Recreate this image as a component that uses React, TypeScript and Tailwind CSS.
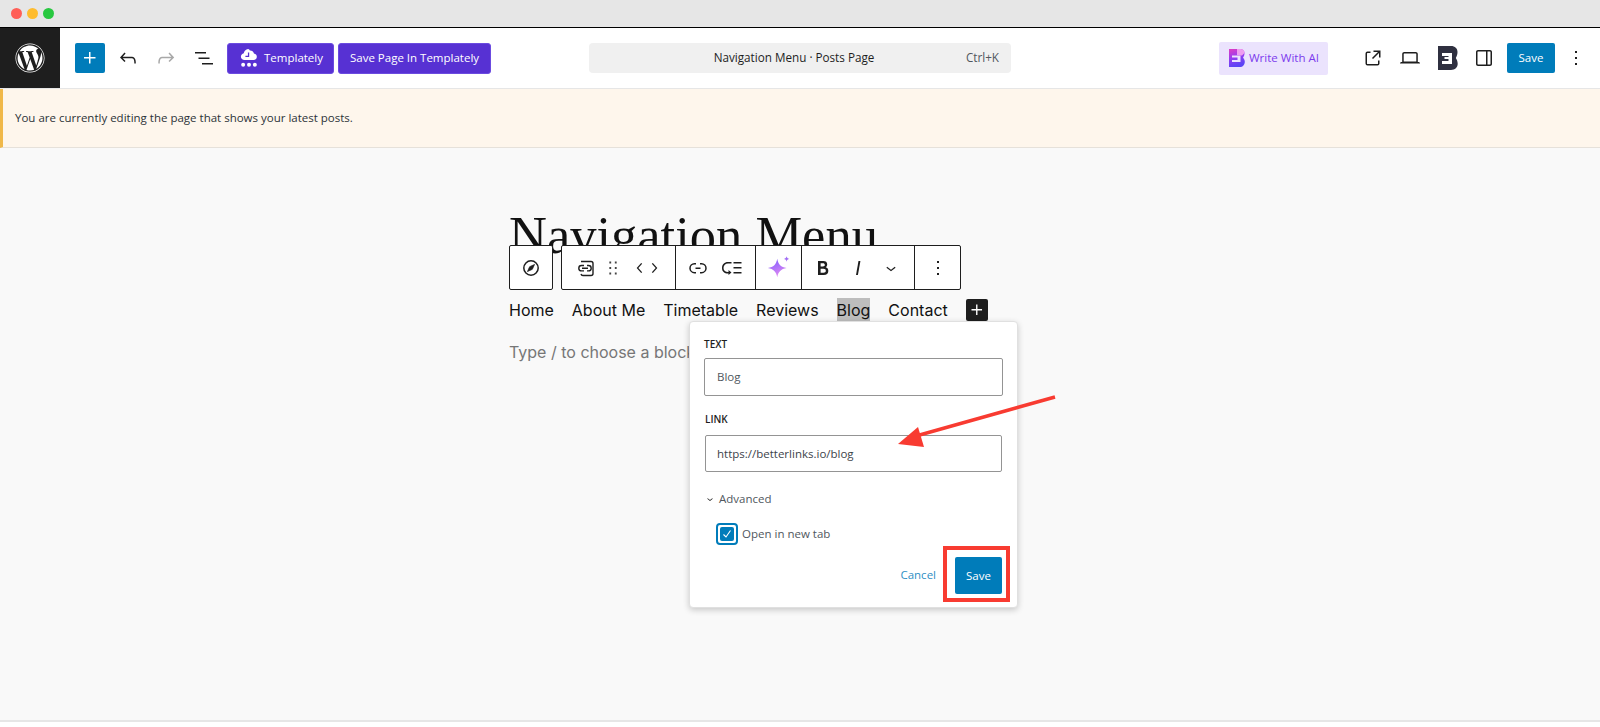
import React from 'react';
import { FaWordpress } from 'react-icons/fa';

const UI_FONT = "font-['Open_Sans','Liberation_Sans',sans-serif]";

function Icon({ d, className = 'w-6 h-6' }: { d: string; className?: string }) {
  return (
    <svg viewBox="0 0 24 24" className={className} fill="currentColor">
      <path d={d} />
    </svg>
  );
}

const paths = {
  plus: 'M11 12.5V17.5H12.5V12.5H17.5V11H12.5V6H11V11H6V12.5H11Z',
  undo: 'M18.3 11.7c-.6-.6-1.4-.9-2.3-.9H6.7l2.9-3.3-1.1-1-4.5 5L8.5 16l1-1-2.7-2.7H16c.5 0 .9.2 1.3.5 1 1 1 3.4 1 4.5v.3h1.5v-.2c0-1.5 0-4.3-1.5-5.7z',
  redo: 'M15.6 6.5l-1.1 1 2.9 3.3H8c-.9 0-1.7.3-2.3.9-1.4 1.5-1.4 4.2-1.4 5.6v.2h1.5v-.3c0-1.1 0-3.5 1-4.5.3-.3.7-.5 1.3-.5h9.2L14.5 15l1.1 1.1 4.6-4.6-4.6-5z',
  list: 'M3 6h11v1.5H3V6Zm3.5 5.5h11V13h-11v-1.5ZM21 17H10v1.5h11V17Z',
  external: 'M19.5 4.5h-7V6h4.44l-5.97 5.97 1.06 1.06L18 7.06v4.44h1.5v-7Zm-13 1a2 2 0 0 0-2 2v10a2 2 0 0 0 2 2h10a2 2 0 0 0 2-2v-3H17v3a.5.5 0 0 1-.5.5h-10a.5.5 0 0 1-.5-.5v-10a.5.5 0 0 1 .5-.5h3V5.5h-3Z',
  laptop: 'M20.5 16h-.7V8c0-1.1-.9-2-2-2H6.2c-1.1 0-2 .9-2 2v8h-.7c-.8 0-1.5.7-1.5 1.5h20c0-.8-.7-1.5-1.5-1.5zM5.7 8c0-.3.2-.5.5-.5h11.6c.3 0 .5.2.5.5v7.6H5.7V8z',
  sidebar: 'M18 4H6c-1.1 0-2 .9-2 2v12c0 1.1.9 2 2 2h12c1.1 0 2-.9 2-2V6c0-1.1-.9-2-2-2zm-4 14.5H6c-.3 0-.5-.2-.5-.5V6c0-.3.2-.5.5-.5h8v13zm4.5-.5c0 .3-.2.5-.5.5h-2.5v-13H18c.3 0 .5.2.5.5v12z',
  dots: 'M13 19h-2v-2h2v2zm0-6h-2v-2h2v2zm0-6h-2V5h2v2z',
  drag: 'M8 7h2V5H8v2zm0 6h2v-2H8v2zm0 6h2v-2H8v2zm6-14v2h2V5h-2zm0 8h2v-2h-2v2zm0 6h2v-2h-2v2z',
  left: 'M14.6 7l-1.2-1L8 12l5.4 6 1.2-1-4.6-5z',
  right: 'M10.6 6L9.4 7l4.6 5-4.6 5 1.2 1 5.4-6z',
  link: 'M10 17.389H8.444A5.194 5.194 0 1 1 8.444 7H10v1.5H8.444a3.694 3.694 0 0 0 0 7.389H10v1.5ZM14 7h1.556a5.194 5.194 0 0 1 0 10.39H14v-1.5h1.556a3.694 3.694 0 0 0 0-7.39H14V7Zm-4.5 6h5v-1.5h-5V13Z',
  submenu: 'M2 12c0 3.6 2.4 5.5 6 5.5h.5V19l3-2.5-3-2.5v2H8c-2.5 0-4.5-1.5-4.5-4s2-4.5 4.5-4.5h3.5V6H8c-3.6 0-6 2.4-6 6zm19.5-1h-8v1.5h8V11zm0 5h-8v1.5h8V16zm0-10h-8v1.5h8V6z',
  bold: 'M14.7 11.3c1-.6 1.5-1.6 1.5-3 0-2.3-1.3-3.4-4-3.4H7v14h5.8c1.4 0 2.5-.3 3.3-1 .8-.7 1.2-1.7 1.2-2.9.1-1.9-.8-3.1-2.6-3.7zm-5.1-4h2.3c.6 0 1.1.1 1.4.4.3.3.5.7.5 1.2s-.2 1-.5 1.2c-.3.3-.8.4-1.4.4H9.6V7.3zm4.6 9c-.4.3-1 .4-1.7.4H9.6v-3.9h2.9c.7 0 1.3.2 1.7.5.4.3.6.8.6 1.5s-.2 1.2-.6 1.5z',
  italic: 'M12.5 5L10 19h1.9l2.5-14z',
  down: 'M17.5 11.6L12 16l-5.5-4.4.9-1.2L12 14l4.5-3.6 1 1.2z',
};

function TemplatelyIcon() {
  return (
    <svg viewBox="0 0 20 22" className="w-[18px] h-5" fill="white">
      <path d="M9 1c1 0 1.500 1 2 1.800C13 2.600 15 4 15.500 6c1.800.3 3.200 1.800 3.200 3.600 0 2-1.600 3.600-3.600 3.600H5c-2.200 0-4-1.600-4-3.700 0-1.900 1.400-3.400 3.200-3.700C4.500 3.500 6.500 1 9 1Z" />
      <path d="M9.500 5v4.200H6" fill="none" stroke="#5731d3" strokeWidth="1.400" />
      <circle cx="3.500" cy="18.500" r="2.200" />
      <circle cx="10" cy="18.500" r="2.200" />
      <circle cx="16.500" cy="18.500" r="2.200" />
    </svg>
  );
}

function AiLogo() {
  return (
    <svg viewBox="0 0 16 18" className="w-[16px] h-[18px]">
      <defs>
        <linearGradient id="ai" x1="0" y1="0" x2="0.3" y2="1">
          <stop offset="0" stopColor="#e23cc0" />
          <stop offset="0.5" stopColor="#9a3cf0" />
          <stop offset="1" stopColor="#5b45f5" />
        </linearGradient>
      </defs>
      <path d="M0 0h11c3 0 4.500 1.800 4.500 4.300 0 1.800-.7 3.200-1.500 4.400 1 1 1.800 2.300 1.800 4 0 3-2 5.300-5 5.300H0Z" fill="url(#ai)" />
      <path d="M3 6.500h8.500v6.500H3v-2h5.500v-2.500H3Z" fill="#ebe3fd" />
      <path d="M8 0h3.500c2.500 0 4 1.600 4 4l-2.500 2.500H8Z" fill="#ee9cf0" />
    </svg>
  );
}

function DarkLogo() {
  return (
    <svg viewBox="0 0 20 24" className="h-6 w-5">
      <path d="M0 0h13c4 0 6.500 2.500 6.500 6 0 2.400-.8 4.500-1.700 6 1 1.500 1.900 3.500 1.900 5.800 0 3.700-2.700 6.200-6.700 6.200H0Z" fill="#2f3040" />
      <path d="M4 7h10v11H4v-3h6.500v-2h-4v-2h4v-1H4Z" fill="white" />
    </svg>
  );
}

function CompassIcon() {
  return (
    <svg viewBox="0 0 24 24" className="w-6 h-6" fill="none" stroke="#1e1e1e" strokeWidth="1.500">
      <circle cx="12" cy="12" r="7.200" />
      <path d="M15.500 8.500 13.300 13.300 8.500 15.500 10.700 10.700Z" fill="#1e1e1e" strokeWidth="0.800" />
    </svg>
  );
}

function NavLinkIcon() {
  return (
    <svg viewBox="0 0 24 24" className="w-6 h-6" fill="none" stroke="#1e1e1e" strokeWidth="1.400">
      <path d="M7 5.500h10a2 2 0 0 1 2 2v10a2 2 0 0 1-2 2H9a2 2 0 0 1-2-1.500" />
      <path d="M10 9.500H7.500a2.700 2.700 0 0 0 0 5.400H10M13 9.500h1.500a2.700 2.700 0 0 1 0 5.400H13M8 12.200h6" />
    </svg>
  );
}

function Sparkle() {
  return (
    <svg viewBox="0 0 24 24" className="h-7 w-7">
      <defs>
        <linearGradient id="spark" x1="0.2" y1="0" x2="0.6" y2="1">
          <stop offset="0" stopColor="#7c5cff" />
          <stop offset="1" stopColor="#e58cf2" />
        </linearGradient>
      </defs>
      <path d="M10.500 4c.9 4.900 3.100 7.100 8 8-4.900.9-7.100 3.100-8 8-.9-4.900-3.100-7.100-8-8 4.900-.9 7.100-3.100 8-8Z" fill="url(#spark)" />
      <path d="M18.500 2c.3 1.400.9 2 2.300 2.300-1.400.3-2 .9-2.300 2.300-.3-1.400-.9-2-2.300-2.300 1.400-.3 2-.9 2.300-2.300Z" fill="#a06cf5" />
    </svg>
  );
}

function BlockToolbar() {
  return (
    <div className="absolute left-[509px] top-[245px] flex h-[45px] text-[#1e1e1e]">
      <div className="flex w-[44px] items-center justify-center rounded-[2px] border border-[#1e1e1e] bg-white">
        <CompassIcon />
      </div>
      <div className="ml-2 flex rounded-[2px] border border-[#1e1e1e] bg-white">
        <div className="flex w-[113px] items-center pl-[12px]">
          <NavLinkIcon />
          <Icon d={paths.drag} className="ml-[4px] h-[22px] w-[22px] text-[#444]" />
          <Icon d={paths.left} className="ml-[6px] h-5 w-5" />
          <Icon d={paths.right} className="-ml-[6px] h-5 w-5" />
        </div>
        <div className="flex w-[80px] items-center gap-[10px] border-l border-[#1e1e1e] pl-[10px]">
          <Icon d={paths.link} className="h-6 w-6" />
          <Icon d={paths.submenu} className="h-6 w-6" />
        </div>
        <div className="flex w-[46px] items-center justify-center border-l border-[#1e1e1e]">
          <Sparkle />
        </div>
        <div className="flex w-[113px] items-center border-l border-[#1e1e1e] pl-[9px]">
          <Icon d={paths.bold} className="h-6 w-6" />
          <Icon d={paths.italic} className="ml-[11px] h-6 w-6" />
          <Icon d={paths.down} className="ml-[11px] h-5 w-5" />
        </div>
        <div className="flex w-[46px] items-center justify-center border-l border-[#1e1e1e]">
          <Icon d={paths.dots} className="h-6 w-6" />
        </div>
      </div>
    </div>
  );
}

function LinkPopover() {
  return (
    <div className={`${UI_FONT} absolute left-[689px] top-[321px] h-[287px] w-[329px] rounded-[4px] border border-[#e0e0e0] bg-white px-[14px] shadow-[0_2px_6px_rgba(0,0,0,0.2)]`}>
      <div className="mt-[15px] text-[10px] leading-[14px] font-semibold text-[#1e1e1e]">TEXT</div>
      <div className="mt-[7px] flex h-[38px] w-[299px] items-center rounded-[2px] border border-[#949494] pl-[12px] text-[11.500px] text-[#50575e]">Blog</div>
      <div className="mt-[16px] ml-px text-[10px] leading-[14px] font-semibold text-[#1e1e1e]">LINK</div>
      <div className="mt-[9px] ml-px flex h-[37px] w-[297px] items-center rounded-[2px] border border-[#949494] pl-[11px] text-[11.500px] text-[#3c434a]">https://betterlinks.io/blog</div>
      <div className="mt-[19px] flex items-center text-[11.500px] leading-[16px] text-[#50575e]">
        <Icon d={paths.down} className="h-[12px] w-[12px] text-[#1e1e1e]" />
        <span className="ml-[3px]">Advanced</span>
      </div>
      <div className="mt-[16px] ml-[12px] flex items-center text-[11.500px] text-[#50575e]">
        <div className="flex h-[22px] w-[22px] items-center justify-center rounded-[4px] border-2 border-[#007cba] bg-white">
          <div className="flex h-[14px] w-[14px] items-center justify-center rounded-[2px] bg-[#007cba]">
            <svg viewBox="0 0 12 12" className="h-3 w-3" fill="none" stroke="white" strokeWidth="1.100">
              <path d="M2.500 6.500 5 9l4.500-6.500" />
            </svg>
          </div>
        </div>
        <span className="ml-[4px]">Open in new tab</span>
      </div>
      <div className="mt-px -mr-[7px] flex items-center justify-end">
        <span className="mt-[2px] mr-[7px] text-[11.500px] text-[#2f8fc4]">Cancel</span>
        <div className="border-4 border-[#f83b31] pt-[7px] pr-[4px] pb-[4px] pl-[8px]">
          <div className="flex h-[37px] w-[47px] items-center justify-center rounded-[2px] bg-[#007cba] text-[11.500px] font-medium text-white">Save</div>
        </div>
      </div>
    </div>
  );
}

function RedArrow() {
  return (
    <svg className="pointer-events-none absolute left-[880px] top-[380px]" width="190" height="80" viewBox="0 0 190 80">
      <path d="M175 17 36 56" stroke="#f83b31" strokeWidth="3.500" />
      <path d="M18 64 38 47 44 67Z" fill="#f83b31" />
    </svg>
  );
}

export default function App() {
  return (
    <div className={`${UI_FONT} relative h-[727px] w-full overflow-hidden bg-white`}>
      <div className="flex h-[28px] items-center gap-[5px] border-b border-black bg-[#e6e6e6] pl-[11px]">
        <span className="h-[11px] w-[11px] rounded-full bg-[#ff5f57]" />
        <span className="h-[11px] w-[11px] rounded-full bg-[#febc2e]" />
        <span className="h-[11px] w-[11px] rounded-full bg-[#28c840]" />
      </div>

      <header className="flex h-[61px] items-center border-b border-[#e6e6e6] bg-white">
        <div className="flex h-[60px] w-[60px] items-center justify-center bg-[#1e1e1e] text-white">
          <FaWordpress className="h-[30px] w-[30px]" />
        </div>
        <div className="ml-[15px] flex h-[30px] w-[30px] items-center justify-center rounded-[2px] bg-[#007cba] text-white">
          <Icon d={paths.plus} />
        </div>
        <div className="ml-[11px] flex items-center gap-[14px]">
          <Icon d={paths.undo} className="h-6 w-6 text-[#1e1e1e]" />
          <Icon d={paths.redo} className="h-6 w-6 text-[#a8a8a8]" />
          <Icon d={paths.list} className="h-6 w-6 text-[#1e1e1e]" />
        </div>
        <button className="ml-[11px] flex h-[31px] w-[107px] items-center rounded-[3px] border border-[#6b4be0] bg-[#5731d3] pl-[12px] text-[11.500px] text-white">
          <TemplatelyIcon />
          <span className="ml-[6px]">Templately</span>
        </button>
        <button className="ml-[4px] h-[31px] w-[153px] rounded-[3px] border border-[#6b4be0] bg-[#5731d3] text-[11.500px] text-white">
          Save Page In Templately
        </button>
        <div className="relative ml-[98px] flex h-[30px] w-[422px] items-center justify-center rounded-[4px] bg-[#f0f0f0] text-[11.700px] text-[#1e1e1e]">
          <span className="-ml-[12px]">Navigation Menu · Posts Page</span>
          <span className="absolute right-[12px] text-[#50575e]">Ctrl+K</span>
        </div>
        <div className="ml-[208px] flex h-[33px] w-[109px] items-center rounded-[2px] bg-[#ebe3fd] pl-[10px] text-[11.500px] font-medium text-[#7c3aed]">
          <AiLogo />
          <span className="ml-[4px]">Write With AI</span>
        </div>
        <Icon d={paths.external} className="ml-[33px] h-6 w-6 text-[#1e1e1e]" />
        <Icon d={paths.laptop} className="ml-[13px] h-6 w-6 text-[#1e1e1e]" />
        <div className="ml-[16px] flex w-[20px] items-center"><DarkLogo /></div>
        <Icon d={paths.sidebar} className="ml-[14px] h-6 w-6 text-[#1e1e1e]" />
        <div className="ml-[11px] flex h-[30px] w-[48px] items-center justify-center rounded-[2px] bg-[#007cba] text-[11.500px] font-medium text-white">Save</div>
        <Icon d={paths.dots} className="ml-[9px] h-6 w-6 text-[#1e1e1e]" />
      </header>

      <div className="flex h-[59px] items-center border-b border-[#e6e1da] border-l-[3px] border-l-[#f0b849] bg-[#fef6ec] pl-[12px] text-[11.500px] text-[#2c3338]">
        You are currently editing the page that shows your latest posts.
      </div>

      <main className="h-[574px] border-b-2 border-[#e6e6e6] bg-[#f9f9f9] pl-[509px]">
        <div className="h-[150px] pt-[57px]">
          <h1 className="font-['Liberation_Serif',serif] text-[52.500px] leading-[60px] font-normal text-[#111]">Navigation Menu</h1>
        </div>
        <nav className="flex h-[24px] items-center gap-[18px] font-['Inter',sans-serif] text-[16px] text-[#111]">
          <span>Home</span>
          <span>About Me</span>
          <span>Timetable</span>
          <span>Reviews</span>
          <span className="flex h-[24px] items-center bg-[#bdbdbd]">Blog</span>
          <span>Contact</span>
          <span className="flex h-[22px] w-[22px] items-center justify-center rounded-[2px] bg-[#1e1e1e] text-white">
            <Icon d={paths.plus} className="h-6 w-6" />
          </span>
        </nav>
        <p className="mt-[18px] font-['Inter',sans-serif] text-[16px] leading-[24px] text-[#767676]">Type / to choose a block</p>
      </main>

      <BlockToolbar />
      <LinkPopover />
      <RedArrow />
    </div>
  );
}
